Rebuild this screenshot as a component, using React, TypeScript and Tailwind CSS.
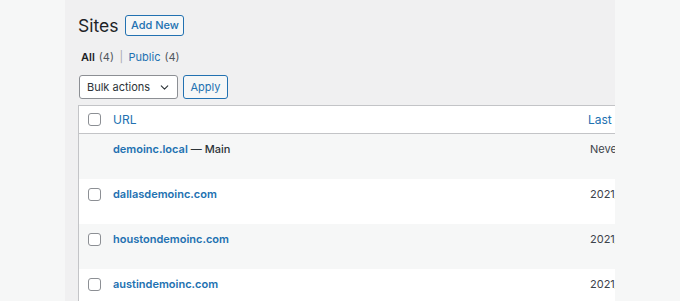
import { ChevronDown } from 'lucide-react';

type Site = { url: string; main?: boolean; updated: string };

const sites: Site[] = [
  { url: 'demoinc.local', main: true, updated: 'Never' },
  { url: 'dallasdemoinc.com', updated: '2021/05/12' },
  { url: 'houstondemoinc.com', updated: '2021/05/12' },
  { url: 'austindemoinc.com', updated: '2021/05/12' },
];

function Check() {
  return <span className="block h-[13px] w-[13px] shrink-0 rounded-[3px] border border-[#8c8f94] bg-white" />;
}

export default function App() {
  return (
    <div className="flex h-[301px] w-[680px] overflow-hidden font-['Inter','Liberation_Sans',sans-serif] text-[11px] text-[#3c434a]">
      <div className="w-[65px] shrink-0 bg-[#f6f7f7]" />

      <div className="w-[550px] shrink-0 overflow-hidden bg-[#f0f0f1] pl-[13px]">
        {/* title */}
        <div className="flex h-[50px] items-center gap-[7px] pt-[1px]">
          <h1 className="text-[17.5px] leading-none text-[#1d2327]">Sites</h1>
          <button className="flex h-[21px] w-[59px] items-center justify-center rounded-[3px] border border-[#2271b1] bg-[#f6f7f7] text-[11px] font-medium text-[#2271b1]">
            Add New
          </button>
        </div>

        {/* views */}
        <div className="flex h-[14px] items-center gap-[4px] pl-[3px] text-[11px] text-[#50575e]">
          <span className="font-semibold text-[#1d2327]">All</span>
          <span>(4)</span>
          <span className="px-[1.5px] text-[#a7aaad]">|</span>
          <span className="text-[#2271b1]">Public</span>
          <span>(4)</span>
        </div>

        {/* bulk actions */}
        <div className="mt-[11px] flex gap-[5px] pl-[1px]">
          <div className="flex h-[24px] w-[99px] items-center justify-between rounded-[3px] border border-[#8c8f94] bg-white pl-[7px] pr-[6px] text-[11px] text-[#2c3338]">
            <span>Bulk actions</span>
            <ChevronDown className="h-[13px] w-[13px] text-[#2c3338]" strokeWidth={2} />
          </div>
          <button className="flex h-[24px] w-[45px] items-center justify-center rounded-[3px] border border-[#2271b1] bg-[#f6f7f7] text-[11px] text-[#2271b1]">
            Apply
          </button>
        </div>

        {/* table */}
        <div className="mt-[6px] w-[700px] border border-[#c3c4c7] bg-white">
          <div className="flex h-[28px] items-center border-b border-[#c3c4c7]">
            <div className="w-[34px] pl-[9px]">
              <Check />
            </div>
            <span className="w-[475px] text-[12px] text-[#2271b1]">URL</span>
            <span className="text-[12px] text-[#2271b1]">Last Updated</span>
          </div>
          {sites.map((s, i) => (
            <div
              key={s.url}
              className={`flex h-[45px] items-start pt-[8px] ${i % 2 === 0 ? 'bg-[#f6f7f7]' : 'bg-white'}`}
            >
              <div className="w-[34px] pl-[9px] pt-[1px]">{!s.main && <Check />}</div>
              <span className="w-[477px] leading-[14px]">
                <span className="font-semibold text-[#2271b1]">{s.url}</span>
                {s.main && <span className="font-medium text-[#2c3338]"> — Main</span>}
              </span>
              <span className="leading-[14px] text-[#3c434a]">{s.updated}</span>
            </div>
          ))}
        </div>
      </div>

      <div className="flex-1 bg-[#f6f7f7]" />
    </div>
  );
}
